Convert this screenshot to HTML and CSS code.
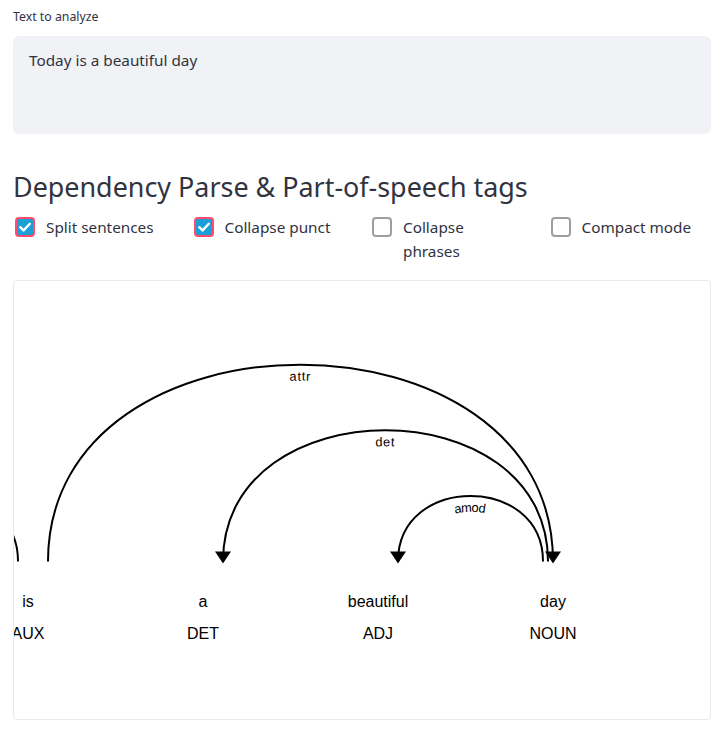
FILE: index.html
```html
<!DOCTYPE html>
<html lang="en">
<head>
<meta charset="utf-8">
<title>Dependency Parse</title>
<link rel="stylesheet" href="styles.css">
</head>
<body>
<main class="page">
  <div class="field-label">Text to analyze</div>
  <div class="textarea">Today is a beautiful day</div>
  <h2 class="heading">Dependency Parse &amp; Part-of-speech tags</h2>
  <div class="options">
    <label class="check">
      <span class="box on"><svg viewBox="0 0 20 20" width="20" height="20"><path d="M5.2 10.2 L8.6 13.4 L14.8 6.8" fill="none" stroke="#fff" stroke-width="2.4" stroke-linecap="round" stroke-linejoin="round"/></svg></span>
      <span class="check-text">Split sentences</span>
    </label>
    <label class="check">
      <span class="box on"><svg viewBox="0 0 20 20" width="20" height="20"><path d="M5.2 10.2 L8.6 13.4 L14.8 6.8" fill="none" stroke="#fff" stroke-width="2.4" stroke-linecap="round" stroke-linejoin="round"/></svg></span>
      <span class="check-text">Collapse punct</span>
    </label>
    <label class="check">
      <span class="box"></span>
      <span class="check-text">Collapse phrases</span>
    </label>
    <label class="check">
      <span class="box"></span>
      <span class="check-text">Compact mode</span>
    </label>
  </div>
  <div class="displacy">
    <svg class="dep" width="925" height="399.5" viewBox="0 0 925 399.5" xmlns="http://www.w3.org/2000/svg">
      <text class="tok" text-anchor="middle" y="309.5"><tspan x="50">Today</tspan><tspan x="50" dy="2em">NOUN</tspan></text>
      <text class="tok" text-anchor="middle" y="309.5"><tspan x="225">is</tspan><tspan x="225" dy="2em">AUX</tspan></text>
      <text class="tok" text-anchor="middle" y="309.5"><tspan x="400">a</tspan><tspan x="400" dy="2em">DET</tspan></text>
      <text class="tok" text-anchor="middle" y="309.5"><tspan x="575">beautiful</tspan><tspan x="575" dy="2em">ADJ</tspan></text>
      <text class="tok" text-anchor="middle" y="309.5"><tspan x="750">day</tspan><tspan x="750" dy="2em">NOUN</tspan></text>

      <g>
        <path id="arrow-0" class="arc" d="M70,264.5 C70,177.0 215.0,177.0 215.0,264.5"/>
        <text class="arc-label" dy="1.25em"><textPath href="#arrow-0" startOffset="50%" text-anchor="middle">nsubj</textPath></text>
        <path class="head" d="M70,266.5 L62,254.5 78,254.5"/>
      </g>
      <g>
        <path id="arrow-1" class="arc" d="M245,264.5 C245,2.0 750.0,2.0 750.0,264.5"/>
        <text class="arc-label" dy="1.25em"><textPath href="#arrow-1" startOffset="50%" text-anchor="middle">attr</textPath></text>
        <path class="head" d="M750.0,266.5 L758.0,254.5 742.0,254.5"/>
      </g>
      <g>
        <path id="arrow-2" class="arc" d="M420,264.5 C420,89.5 745.0,89.5 745.0,264.5"/>
        <text class="arc-label" dy="1.25em"><textPath href="#arrow-2" startOffset="50%" text-anchor="middle">det</textPath></text>
        <path class="head" d="M420,266.5 L412,254.5 428,254.5"/>
      </g>
      <g>
        <path id="arrow-3" class="arc" d="M595,264.5 C595,177.0 740.0,177.0 740.0,264.5"/>
        <text class="arc-label" dy="1.25em"><textPath href="#arrow-3" startOffset="50%" text-anchor="middle">amod</textPath></text>
        <path class="head" d="M595,266.5 L587,254.5 603,254.5"/>
      </g>
    </svg>
  </div>
</main>
</body>
</html>
```

FILE: styles.css
```css
* { box-sizing: border-box; }

html, body {
  margin: 0;
  padding: 0;
  background: #ffffff;
}

body {
  font-family: "Noto Sans", "Open Sans", sans-serif;
  color: #31333f;
}

.page {
  width: 698px;
  margin-left: 13px;
  padding-top: 9px;
}

.field-label {
  font-size: 12.3px;
  line-height: 16px;
  height: 16px;
  margin-bottom: 11px;
}

.textarea {
  height: 98px;
  background: #f0f2f6;
  border-radius: 6px;
  padding: 12px 16px;
  font-size: 15.3px;
  line-height: 24px;
}

.heading {
  margin: 36px 0 0 0;
  font-size: 26.9px;
  font-weight: 400;
  line-height: 34px;
  letter-spacing: 0;
}

.options {
  display: grid;
  grid-template-columns: repeat(4, 1fr);
  column-gap: 16px;
  margin-top: 11px;
}

.check {
  display: flex;
  align-items: flex-start;
  gap: 11px;
  font-size: 15.3px;
  line-height: 24px;
}

.box {
  flex: none;
  width: 20px;
  height: 20px;
  margin-top: 2px;
  margin-left: 2px;
  border: 2px solid #9e9e9e;
  border-radius: 4px;
  background: #fff;
  position: relative;
}

.box.on {
  background: #1a9fd6;
  border-color: #ff4b6e;
}

.box svg {
  position: absolute;
  left: -2px;
  top: -2px;
}

.check-text {
  display: block;
  max-width: 114px;
}

.displacy {
  margin-top: 17px;
  border: 1px solid #e6e9ef;
  border-radius: 4px;
  padding: 16px 16px 22px 16px;
  overflow: hidden;
}

.dep {
  display: block;
  margin-left: -227px;
  color: #000000;
  background: #ffffff;
  font-family: "Liberation Sans", Arial, sans-serif;
  font-size: 16px;
}

.tok {
  fill: currentColor;
}

.arc {
  fill: none;
  stroke: currentColor;
  stroke-width: 2px;
}

.head {
  fill: currentColor;
}

.arc-label {
  font-size: 0.8em;
  letter-spacing: 1px;
  fill: currentColor;
}
```
